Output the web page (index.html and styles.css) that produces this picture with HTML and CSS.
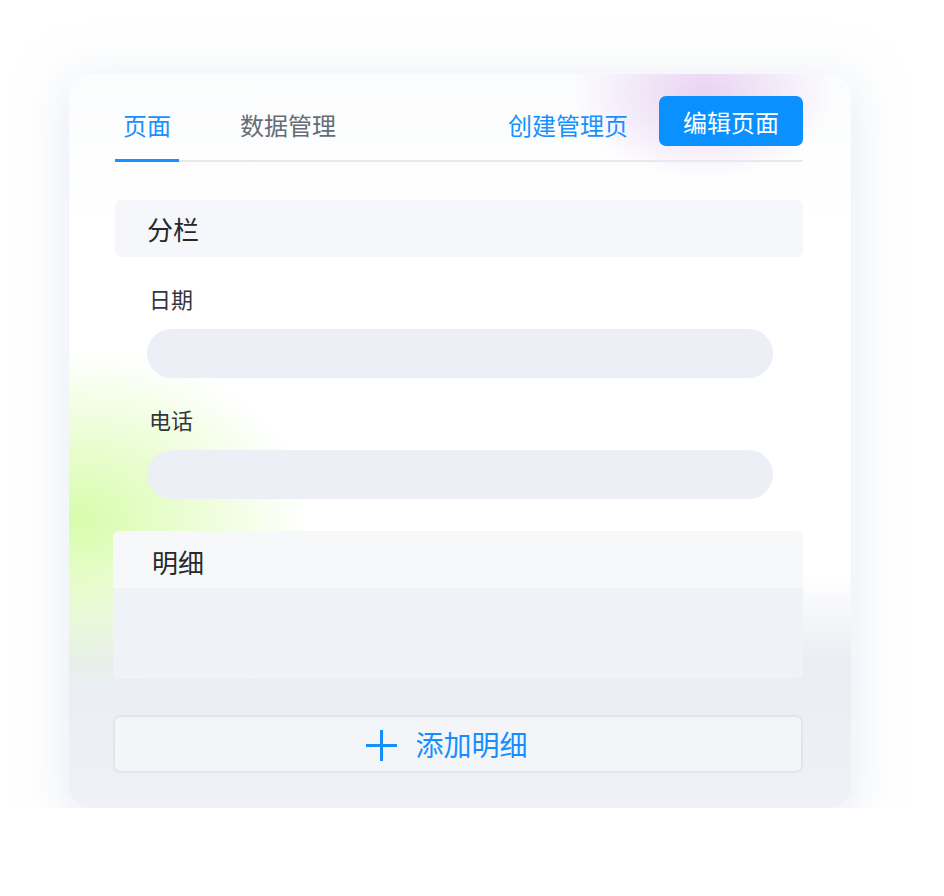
FILE: index.html
```html
<!DOCTYPE html>
<html lang="zh-CN">
<head>
  <meta charset="UTF-8">
  <meta name="viewport" content="width=device-width, initial-scale=1.0">
  <title>页面编辑</title>
  <link rel="stylesheet" href="styles.css">
</head>
<body>
  <div class="stage">
    <div class="card">
      <div class="header">
        <div class="tabs">
          <div class="tab active">页面</div>
          <div class="tab">数据管理</div>
        </div>
        <div class="actions">
          <span class="link">创建管理页</span>
          <button class="primary">编辑页面</button>
        </div>
      </div>

      <div class="section-title">分栏</div>

      <div class="field">
        <div class="label">日期</div>
        <div class="input"></div>
      </div>
      <div class="field">
        <div class="label">电话</div>
        <div class="input"></div>
      </div>

      <div class="detail">
        <div class="detail-title">明细</div>
        <div class="detail-body"></div>
      </div>

      <button class="add-btn">
        <svg width="31" height="31" viewBox="0 0 31 31">
          <path d="M15.5 0v31M0 15.5h31" stroke="#168eff" stroke-width="3" fill="none"/>
        </svg>
        <span>添加明细</span>
      </button>
    </div>
  </div>
</body>
</html>
```

FILE: styles.css
```css
body {
  margin: 0;
  background: #ffffff;
  font-family: "Noto Sans CJK SC", "Noto Sans", sans-serif;
}

.stage {
  padding: 74px 0 0 69px;
}

.card {
  width: 782px;
  height: 734px;
  box-sizing: border-box;
  padding: 0 48px 0 46px;
  border-radius: 22px;
  background:
    radial-gradient(ellipse 130px 85px at 635px 20px, rgba(226, 196, 238, 0.75), rgba(226, 196, 238, 0) 100%),
    radial-gradient(ellipse 230px 170px at 10px 445px, rgba(214, 252, 168, 0.95), rgba(214, 252, 168, 0) 100%),
    linear-gradient(to bottom, #fbfcfd 0%, #ffffff 20%, #ffffff 68%, #eaedf3 80%, #eff1f6 100%);
  box-shadow: 0 8px 40px 12px rgba(222, 229, 240, 0.5);
}

.header {
  display: flex;
  justify-content: space-between;
  align-items: flex-end;
  padding-top: 22px;
  border-bottom: 2px solid #e7e9ee;
}

.tabs {
  display: flex;
  gap: 53px;
}

.tab {
  padding: 0 8px 17px;
  font-size: 24px;
  line-height: 34px;
  color: #666b74;
  border-bottom: 3px solid transparent;
  margin-bottom: -2px;
}

.tab.active {
  color: #1890ff;
  border-bottom-color: #1890ff;
}

.actions {
  display: flex;
  align-items: center;
  gap: 31px;
  padding-bottom: 14px;
}

.link {
  font-size: 24px;
  line-height: 34px;
  padding-top: 7px;
  color: #1890ff;
}

.primary {
  width: 144px;
  height: 50px;
  border: none;
  border-radius: 7px;
  background: #0a90ff;
  color: #ffffff;
  font-family: inherit;
  font-size: 24px;
}

.section-title {
  margin-top: 38px;
  height: 57px;
  line-height: 57px;
  padding-left: 32px;
  border-radius: 6px;
  background: rgba(245, 246, 249, 0.9);
  font-size: 26px;
  color: #26282c;
}

.field {
  margin-top: 26px;
  padding: 0 30px 0 32px;
}

.label {
  padding-left: 2px;
  font-size: 22px;
  line-height: 30px;
  color: #33363b;
  margin-bottom: 16px;
}

.input {
  height: 49px;
  border-radius: 25px;
  background: #eceff6;
}

.detail {
  margin: 32px 0 0 -2px;
  border-radius: 6px;
  overflow: hidden;
}

.detail-title {
  box-sizing: border-box;
  height: 57px;
  padding: 7px 0 0 39px;
  line-height: 48px;
  background: #f7f8fa;
  font-size: 26px;
  color: #26282c;
}

.detail-body {
  height: 91px;
  background: #eff2f7;
}

.add-btn {
  display: flex;
  justify-content: center;
  align-items: center;
  gap: 18px;
  width: 690px;
  height: 58px;
  margin: 36px 0 0 -2px;
  padding: 0 22px 0 0;
  border: 2px solid #e2e4e9;
  border-radius: 7px;
  background: #f4f5f9;
  font-family: inherit;
  font-size: 28px;
  color: #168eff;
}

.add-btn svg {
  margin-top: 2px;
}
```
